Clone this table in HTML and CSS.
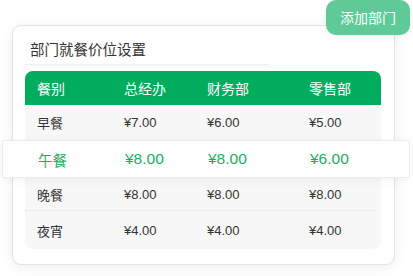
FILE: index.html
```html
<!DOCTYPE html>
<html lang="zh">
<head>
<meta charset="utf-8">
<link rel="stylesheet" href="styles.css">
</head>
<body>
<div class="stage">
  <button class="add-btn">添加部门</button>
  <div class="card">
    <div class="title">部门就餐价位设置</div>
    <div class="table">
      <div class="row head"><span>餐别</span><span>总经办</span><span>财务部</span><span>零售部</span></div>
      <div class="row r1"><span>早餐</span><span>¥7.00</span><span>¥6.00</span><span>¥5.00</span></div>
      <div class="row active"><span>午餐</span><span>¥8.00</span><span>¥8.00</span><span>¥6.00</span></div>
      <div class="row r3 sep"><span>晚餐</span><span>¥8.00</span><span>¥8.00</span><span>¥8.00</span></div>
      <div class="row r4"><span>夜宵</span><span>¥4.00</span><span>¥4.00</span><span>¥4.00</span></div>
    </div>
  </div>
</div>
</body>
</html>
```
FILE: styles.css
```css
* { box-sizing: border-box; }
html, body { margin: 0; padding: 0; background: #fff; }
body {
  font-family: "Liberation Sans", "Noto Sans CJK SC", sans-serif;
  color: #333;
  width: 413px;
  height: 276px;
  overflow: hidden;
}
.stage {
  position: relative;
  padding: 25px 0 0 12px;
}
.add-btn {
  position: absolute;
  top: 0;
  left: 326px;
  width: 84px;
  height: 35px;
  border: none;
  border-radius: 10px;
  background: #5dca97;
  color: #fff;
  font-family: "Noto Sans CJK SC", sans-serif;
  font-size: 14px;
  line-height: 35px;
  padding: 0;
  box-shadow: 0 2px 8px rgba(0,0,0,0.06);
  z-index: 2;
}
.card {
  width: 383px;
  height: 240px;
  background: #fff;
  border: 1px solid #e2e2e2;
  border-radius: 9px;
  box-shadow: 0 3px 14px rgba(0,0,0,0.07);
  padding: 0 13px 0 12px;
}
.title {
  width: 245px;
  padding: 13px 0 5px 5px;
  line-height: 20px;
  font-family: "Noto Sans CJK SC", sans-serif;
  font-size: 14.5px;
  color: #333;
  border-bottom: 1px solid #eeeeee;
}
.table {
  margin-top: 6px;
  width: 356px;
  background: #f7f7f7;
  border-radius: 8px;
}
.row {
  display: grid;
  grid-template-columns: 87px 83px 102px 1fr;
  align-items: center;
  padding-left: 12px;
  font-size: 13px;
  color: #333;
}
.row span:first-child { font-family: "Noto Sans CJK SC", sans-serif; }
.head {
  height: 34px;
  background: #00ad5f;
  color: #fff;
  border-radius: 8px 8px 0 0;
  font-family: "Noto Sans CJK SC", sans-serif;
  font-size: 14px;
}
.r1 { height: 35px; }
.active {
  height: 38px;
  margin: 0 -29px 0 -23px;
  padding-left: 35px;
  background: #fff;
  border: 1px solid #ececec;
  border-radius: 2px;
  box-shadow: 0 2px 10px rgba(0,0,0,0.05);
  color: #1aae5f;
  font-size: 15.5px;
  grid-template-columns: 87px 83px 102px 1fr;
  position: relative;
  z-index: 1;
}
.active span:first-child { font-size: 14.5px; }
.r3 { height: 33px; }
.sep { border-bottom: 1px solid #ebebeb; margin-right: 5px; }
.r4 { height: 38px; border-radius: 0 0 8px 8px; }
```
